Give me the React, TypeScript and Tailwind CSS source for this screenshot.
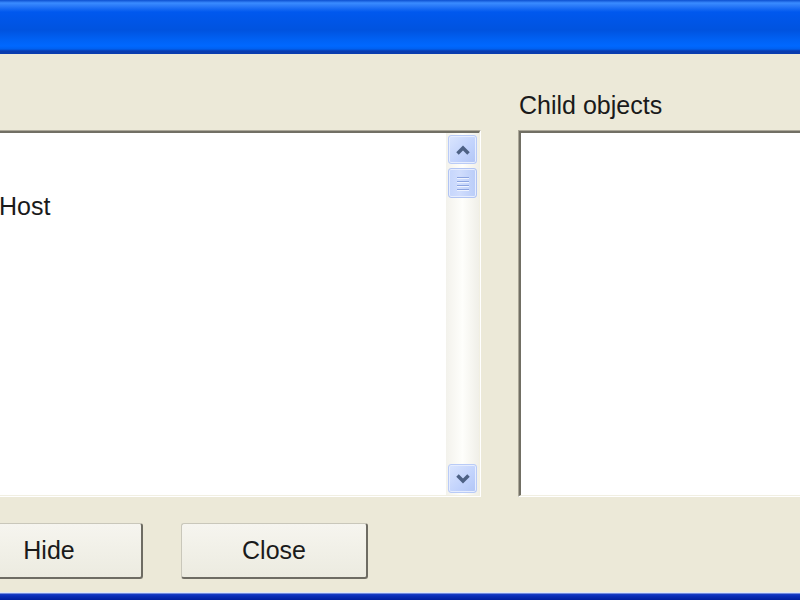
import type { ReactNode } from 'react'

const font = { fontFamily: '"Liberation Sans", Arial, sans-serif' }

// Sunken XP-classic list frame
function ListFrame({ className, noLeft, children }: { className?: string; noLeft?: boolean; children?: ReactNode }) {
  return (
    <div
      className={`shrink-0 border-t border-[#aca899] border-b border-r border-b-white border-r-white ${noLeft ? '' : 'border-l border-l-[#aca899]'} ${className ?? ''}`}
    >
      <div
        className={`h-full border-t-2 border-[#716f64] border-b border-r border-b-[#f1efe2] border-r-[#f1efe2] bg-white ${noLeft ? '' : 'border-l-2 border-l-[#716f64]'}`}
      >
        {children}
      </div>
    </div>
  )
}

function ScrollButton({ dir }: { dir: 'up' | 'down' }) {
  return (
    <div className="flex h-[29px] items-center justify-center rounded-[3px] border border-[#b9cbf7] bg-[linear-gradient(135deg,#dae5fe,#c1d2fc_60%,#b1c5f5)] shadow-[inset_0_0_0_1px_#e6edfe]">
      <svg width="16" height="12" viewBox="0 0 16 12">
        <path
          d={dir === 'up' ? 'M2.5 9.5 L8 4 L13.5 9.5' : 'M2.5 2.5 L8 8 L13.5 2.5'}
          fill="none"
          stroke="#4d6185"
          strokeWidth="3.5"
        />
      </svg>
    </div>
  )
}

function Scrollbar() {
  return (
    <div className="flex h-full w-[33px] flex-col bg-[linear-gradient(to_right,#f3f2ec,#fefefb_50%,#f0efe8)] px-[2px] py-[2px]">
      <ScrollButton dir="up" />
      <div className="mt-[4px] flex h-[30px] flex-col items-center justify-center gap-[3px] rounded-[3px] border border-[#b1c4f3] bg-[linear-gradient(to_right,#c6d6fc,#d0ddfd_40%,#b9ccf8)] shadow-[inset_0_0_0_1px_#e6edfe]">
        <div className="h-[1px] w-[12px] bg-[#8ca4e0] shadow-[0_1px_0_#eef3ff]" />
        <div className="h-[1px] w-[12px] bg-[#8ca4e0] shadow-[0_1px_0_#eef3ff]" />
        <div className="h-[1px] w-[12px] bg-[#8ca4e0] shadow-[0_1px_0_#eef3ff]" />
        <div className="h-[1px] w-[12px] bg-[#8ca4e0] shadow-[0_1px_0_#eef3ff]" />
      </div>
      <div className="flex-1" />
      <ScrollButton dir="down" />
    </div>
  )
}

function Button({ label, className }: { label: string; className?: string }) {
  return (
    <div
      className={`flex h-[56px] w-[187px] shrink-0 items-center justify-center rounded-[3px] border border-[#c9c7ba] border-r-2 border-b-2 border-r-[#6e6c63] border-b-[#6e6c63] bg-[linear-gradient(to_bottom,#f6f5ef,#ecebe0)] text-[25px] text-[#1a1a1a] ${className ?? ''}`}
    >
      {label}
    </div>
  )
}

export default function App() {
  return (
    <div className="flex h-[600px] w-[800px] flex-col overflow-hidden bg-[#ece9d8]" style={font}>
      {/* title bar */}
      <div className="h-[54px] shrink-0 bg-[linear-gradient(to_bottom,#0c4fd0_0px,#3a8cff_3px,#2a7af8_6px,#0058ee_12px,#0053df_30px,#0062f5_40px,#0068ff_46px,#0060f0_49px,#0a3caf_51px,#0a3caf_54px)]" />

      <div className="flex flex-1 flex-col">
        {/* labels */}
        <div className="h-[76px] shrink-0 pt-[37px]">
          <div className="ml-[519px] text-[25px] leading-[29px] text-[#1a1a1a]">Child objects</div>
        </div>

        {/* lists */}
        <div className="flex h-[367px] shrink-0 gap-[37px]">
          <ListFrame className="w-[481px]" noLeft>
            <div className="flex h-full">
              <div className="flex-1 pt-[59px] text-[25px] leading-[29px] text-[#1a1a1a]">
                <div className="-ml-[1px]">Host</div>
              </div>
              <Scrollbar />
            </div>
          </ListFrame>
          <ListFrame className="w-[300px]" />
        </div>

        {/* buttons */}
        <div className="mt-[26px] flex gap-[38px]">
          <Button label="Hide" className="-ml-[44px]" />
          <Button label="Close" />
        </div>
      </div>

      {/* bottom frame edge */}
      <div className="h-[8px] shrink-0 bg-[linear-gradient(to_bottom,#f4f6fb_0px,#c9d6f4_1px,#1a3fc6_2px,#0a2eb8_4px,#001f9e_8px)]" />
    </div>
  )
}
